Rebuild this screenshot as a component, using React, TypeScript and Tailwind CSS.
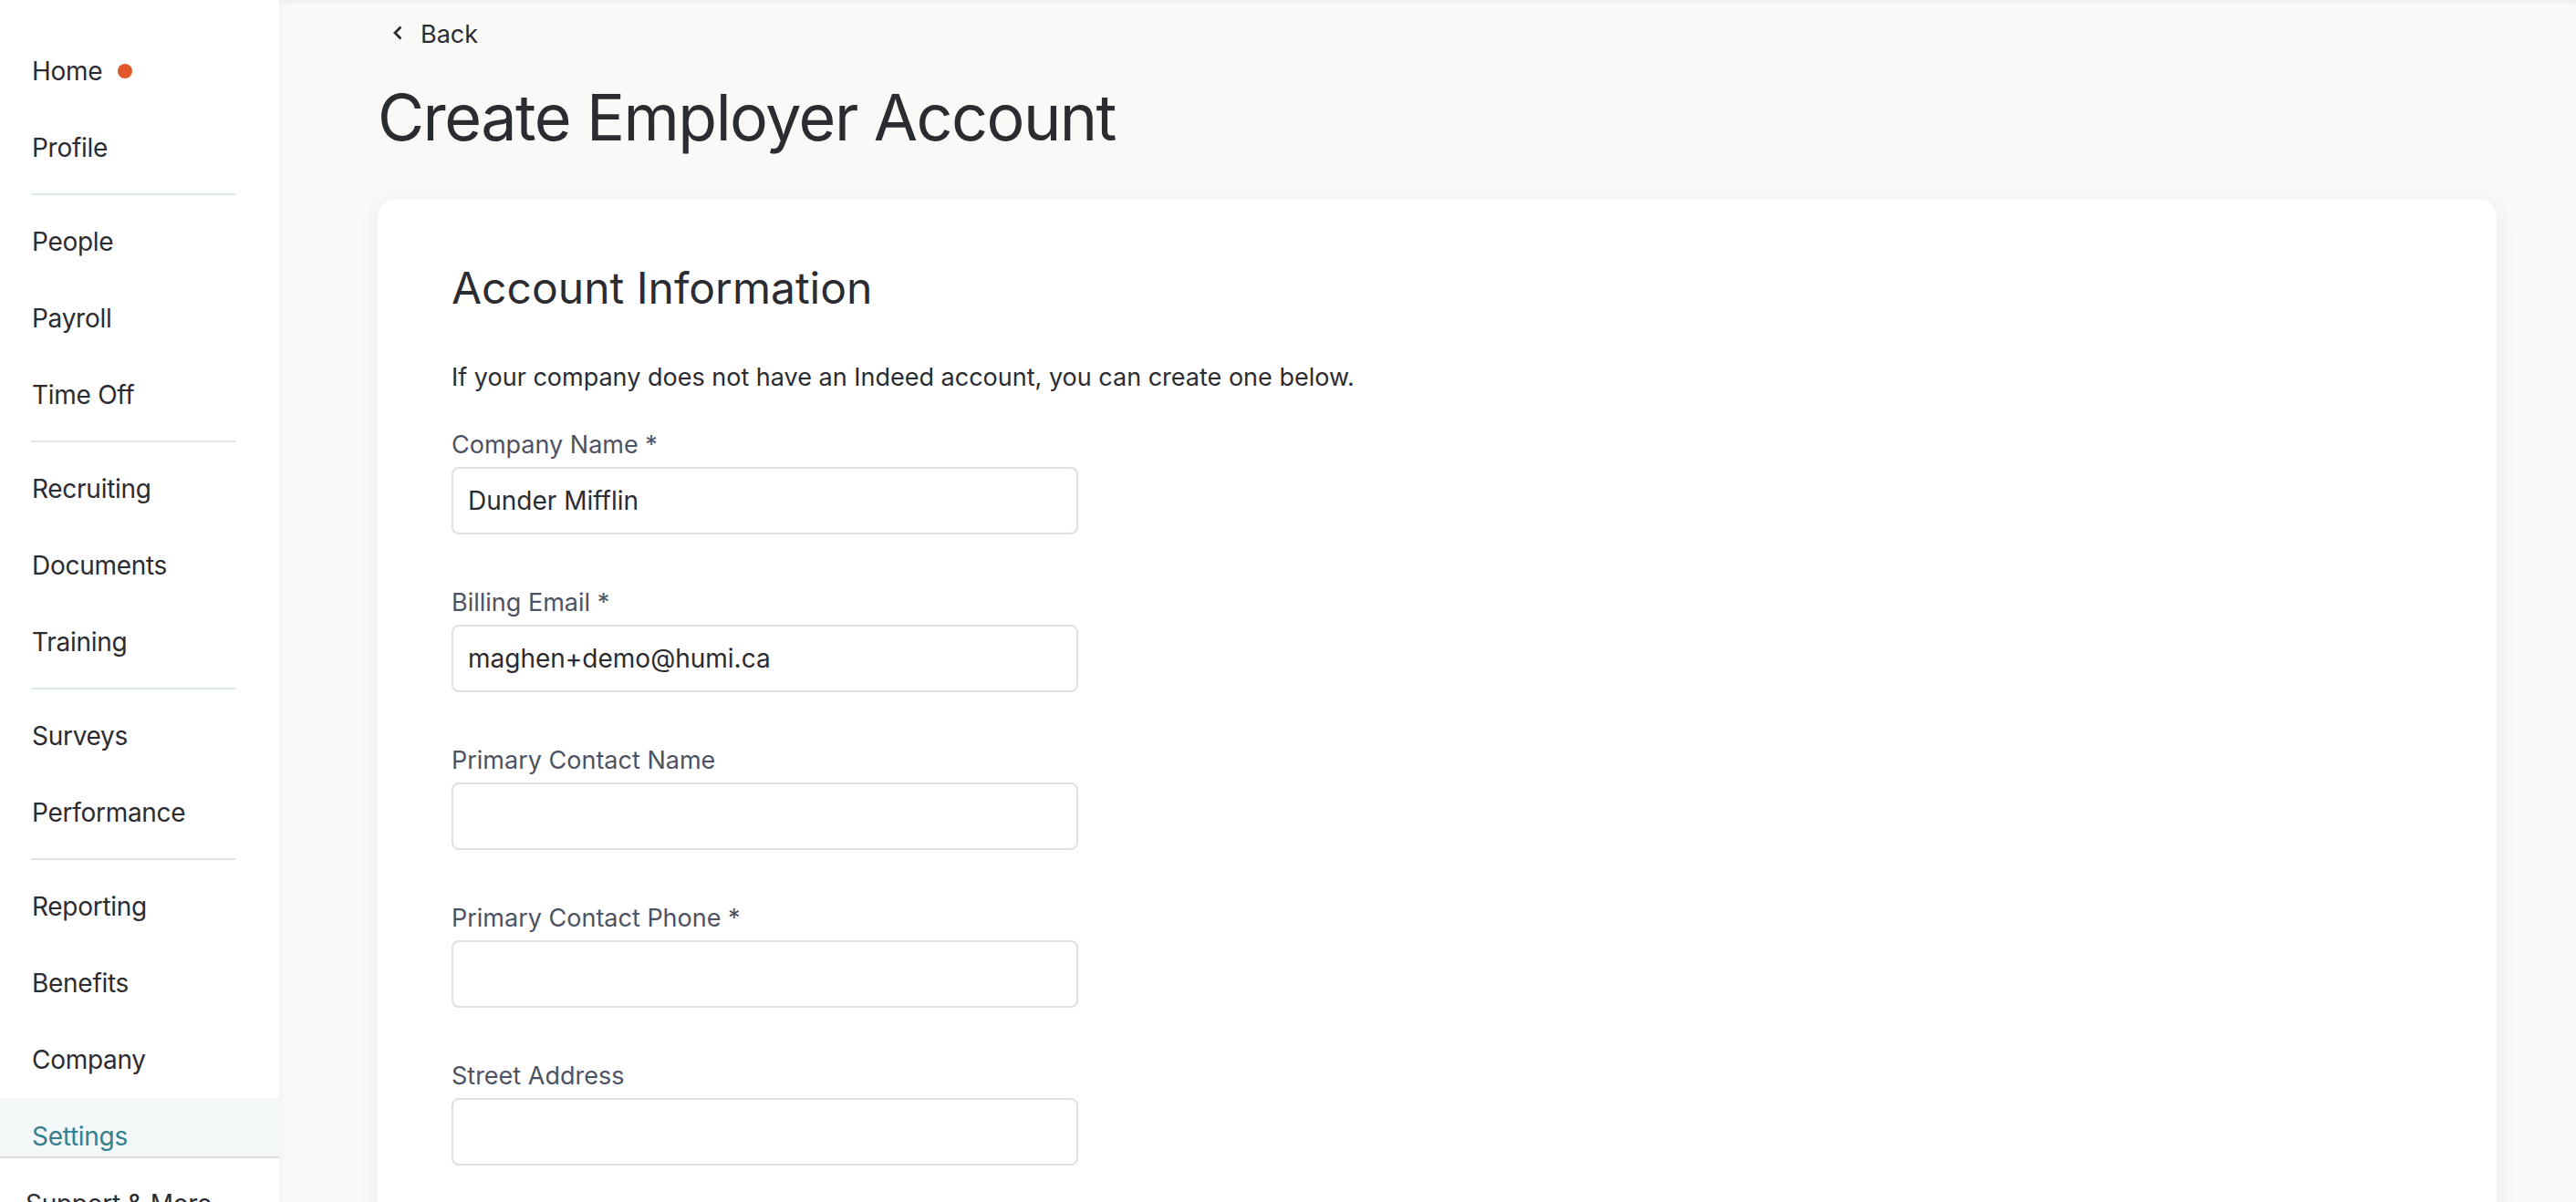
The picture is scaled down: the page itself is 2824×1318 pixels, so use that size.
import React from 'react'

type NavItem = { label: string; dot?: boolean; active?: boolean }

// groups split by the thin teal dividers
const NAV_GROUPS: NavItem[][] = [
  [{ label: 'Home', dot: true }, { label: 'Profile' }],
  [{ label: 'People' }, { label: 'Payroll' }, { label: 'Time Off' }],
  [{ label: 'Recruiting' }, { label: 'Documents' }, { label: 'Training' }],
  [{ label: 'Surveys' }, { label: 'Performance' }],
  [{ label: 'Reporting' }, { label: 'Benefits' }, { label: 'Company' }, { label: 'Settings', active: true }],
]

const FIELDS = [
  { label: 'Company Name *', value: 'Dunder Mifflin' },
  { label: 'Billing Email *', value: 'maghen+demo@humi.ca' },
  { label: 'Primary Contact Name', value: '' },
  { label: 'Primary Contact Phone *', value: '' },
  { label: 'Street Address', value: '' },
]

function Sidebar() {
  return (
    <aside className="relative z-10 flex w-[306px] shrink-0 flex-col bg-white shadow-[2px_0_10px_rgba(0,0,0,0.035)]">
      <nav className="h-[1268px] shrink-0 overflow-hidden pt-[36px]">
        {NAV_GROUPS.map((group, gi) => (
          <div key={gi}>
            {gi > 0 && <div className="mb-[9px] ml-[34px] mt-[8px] h-[2px] w-[224px] bg-[#dce8e8]" />}
            {group.map((item) => (
              <div
                key={item.label}
                className={`flex h-[84px] items-center pl-[35px] text-[28px] leading-[40px] tracking-[-0.01em] ${
                  item.active ? 'bg-[#f3f7f8] text-[#34808c]' : 'text-[#2b2c31]'
                }`}
              >
                <span>{item.label}</span>
                {item.dot && <span className="ml-[17px] h-[16px] w-[16px] rounded-full bg-[#e0582b]" />}
              </div>
            ))}
          </div>
        ))}
      </nav>
      <div className="border-t-2 border-[#dddddd] pl-[28px] pt-[30px] text-[28px] leading-[40px] tracking-[-0.01em] text-[#2b2c31]">
        Support &amp; More
      </div>
    </aside>
  )
}

function Field({ label, value }: { label: string; value: string }) {
  return (
    <div className="flex flex-col">
      <label className="text-[27px] leading-[36px] text-[#4d5262]">{label}</label>
      <input
        readOnly
        value={value}
        className="mt-[6px] h-[74px] w-[687px] rounded-[8px] border-2 border-[#e0e0e0] bg-white pl-[16px] text-[28px] text-[#2b2c31] outline-none"
      />
    </div>
  )
}

export default function App() {
  return (
    <div className="flex h-screen w-full overflow-hidden bg-[#faf9f7] font-['Inter','Noto_Sans',sans-serif] shadow-[inset_0_6px_6px_-4px_rgba(0,0,0,0.05)]">
      <Sidebar />
      <main className="flex-1 overflow-hidden pl-[108px] pr-[87px] pt-[18px]">
        <button className="ml-[16px] flex items-center text-[27px] leading-[40px] text-[#2b2c31]">
          <svg width="12" height="18" viewBox="0 0 12 18" className="mr-[19px] -mt-[4px]">
            <path d="M9.5 2.5 L3 9 L9.5 15.5" fill="none" stroke="#2b2c31" strokeWidth="2.8" />
          </svg>
          Back
        </button>
        <h1 className="mt-[29px] text-[70px] font-normal leading-[84px] tracking-[-0.022em] text-[#2b2c31]">
          Create Employer Account
        </h1>
        <section className="mt-[47px] min-h-[1200px] rounded-[20px] bg-white px-[81px] pt-[69px] shadow-[0_2px_24px_rgba(0,0,0,0.06)]">
          <h2 className="text-[48px] font-normal leading-[58px] text-[#2b2c31]">Account Information</h2>
          <p className="mt-[51px] text-[27px] leading-[36px] text-[#2b2c31]">
            If your company does not have an Indeed account, you can create one below.
          </p>
          <div className="mt-[38px] flex flex-col gap-[57px]">
            {FIELDS.map((f) => (
              <Field key={f.label} label={f.label} value={f.value} />
            ))}
          </div>
        </section>
      </main>
    </div>
  )
}
